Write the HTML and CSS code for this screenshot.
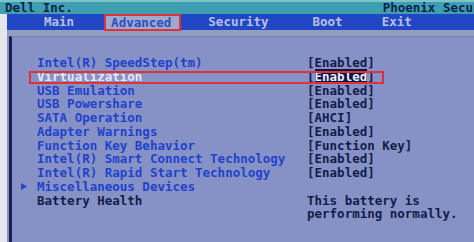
FILE: index.html
```html
<!DOCTYPE html>
<html>
<head>
<meta charset="utf-8">
<link rel="stylesheet" href="styles.css">
</head>
<body>
<div class="screen">
  <div class="header">
    <span class="vendor">Dell Inc.</span>
    <span class="bios">Phoenix Secu</span>
  </div>
  <div class="body">
    <div class="gutter"></div>
    <div class="main">
      <div class="menubar">
        <span class="menu m-main">Main</span>
        <span class="menu tab">Advanced</span>
        <span class="menu m-sec">Security</span>
        <span class="menu m-boot">Boot</span>
        <span class="menu m-exit">Exit</span>
      </div>
      <div class="strip"></div>
      <div class="panel">
        <div class="frame">
          <div class="row"><span class="arrow"></span><span class="label">Intel(R) SpeedStep(tm)</span><span class="value">[Enabled]</span></div>
          <div class="row selected"><span class="arrow"></span><span class="label">Virtualization</span><span class="value">[<span class="hl">Enabled</span>]</span></div>
          <div class="row"><span class="arrow"></span><span class="label">USB Emulation</span><span class="value">[Enabled]</span></div>
          <div class="row"><span class="arrow"></span><span class="label">USB Powershare</span><span class="value">[Enabled]</span></div>
          <div class="row"><span class="arrow"></span><span class="label">SATA Operation</span><span class="value">[AHCI]</span></div>
          <div class="row"><span class="arrow"></span><span class="label">Adapter Warnings</span><span class="value">[Enabled]</span></div>
          <div class="row"><span class="arrow"></span><span class="label">Function Key Behavior</span><span class="value">[Function Key]</span></div>
          <div class="row"><span class="arrow"></span><span class="label">Intel(R) Smart Connect Technology</span><span class="value">[Enabled]</span></div>
          <div class="row"><span class="arrow"></span><span class="label">Intel(R) Rapid Start Technology</span><span class="value">[Enabled]</span></div>
          <div class="row"><span class="arrow"><svg width="6" height="7" viewBox="0 0 6 7"><path d="M0 0 L6 3.5 L0 7 Z" fill="#2446c8"/></svg></span><span class="label">Miscellaneous Devices</span><span class="value"></span></div>
          <div class="row"><span class="arrow"></span><span class="label dark">Battery Health</span><span class="value">This battery is<br>performing normally.</span></div>
        </div>
      </div>
    </div>
  </div>
</div>
</body>
</html>
```
FILE: styles.css
```css
html, body {
  margin: 0;
  padding: 0;
  background: #8692c5;
}
.screen {
  width: 474px;
  height: 242px;
  overflow: hidden;
  display: flex;
  flex-direction: column;
  font-family: "DejaVu Sans Mono", "Liberation Mono", monospace;
  font-weight: bold;
  font-size: 12.5px;
}
.header {
  height: 12px;
  border-top: 2px solid #7ec3cc;
  background: #3d9fb0;
  color: #0b1f4a;
  display: flex;
  align-items: center;
  white-space: nowrap;
  line-height: 12px;
}
.vendor {
  margin-left: 5px;
}
.bios {
  margin-left: auto;
  margin-right: 1px;
}
.body {
  flex: 1;
  display: flex;
}
.gutter {
  width: 7px;
  background: #e4e6ec;
}
.main {
  flex: 1;
  display: flex;
  flex-direction: column;
}
.menubar {
  height: 16px;
  background: #2247c4;
  display: flex;
  align-items: center;
  color: #b9c1e2;
  line-height: 16px;
  white-space: nowrap;
}
.m-main { margin-left: 37px; }
.tab {
  margin-left: 30px;
  height: 17px;
  box-sizing: border-box;
  align-self: flex-start;
  border: 2px solid #e0303a;
  padding: 0 8px 0 5px;
  background: #a0a8cc;
  color: #2a4ec4;
  line-height: 13px;
  position: relative;
  z-index: 1;
}
.m-sec { margin-left: 27px; }
.m-boot { margin-left: 44px; }
.m-exit { margin-left: 39px; }
.strip {
  height: 6px;
  background: #949cc0;
}
.panel {
  flex: 1;
  padding-left: 2px;
  background: #8692c5;
  display: flex;
}
.frame {
  flex: 1;
  border-left: 3px solid #1a2150;
  border-top: 1px solid #737fb6;
  padding: 19px 0 0 8px;
}
.row {
  display: grid;
  grid-template-columns: 17px 270px 1fr;
  line-height: 13.75px;
  position: relative;
  white-space: nowrap;
}
.arrow {
  display: flex;
  align-items: center;
  padding-left: 1px;
}
.label {
  color: #1f42cc;
}
.label.dark {
  color: #121c4a;
}
.value {
  color: #121c4a;
}
.selected .label {
  color: #e6e8f2;
}
.selected::after {
  content: "";
  position: absolute;
  left: 9px;
  top: 1px;
  width: 355px;
  height: 13px;
  border: 2px solid #e0303a;
  box-sizing: border-box;
}
.hl {
  background: #0b1645;
  color: #eef0f8;
}
```
